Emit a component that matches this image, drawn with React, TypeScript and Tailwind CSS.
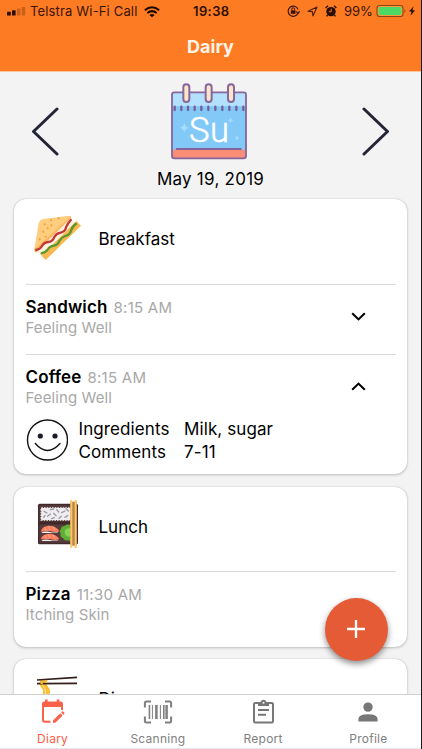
import React from "react";

function StatusBar() {
  return (
    <div className="flex h-[23px] items-center text-[13px] leading-none text-[#3a1404]">
      <svg className="ml-[6px] h-[9px] w-[20px]" viewBox="0 0 20 9">
        <rect x="1" y="4.8" width="3.8" height="3.7" rx="0.6" fill="#2b0f02" />
        <rect x="6" y="3.3" width="3.6" height="5.2" rx="0.6" fill="#2b0f02" />
        <rect x="11" y="1.5" width="3.4" height="7" rx="0.6" fill="#c9601b" />
        <rect x="15.8" y="0" width="3.4" height="8.5" rx="0.6" fill="#c9601b" />
      </svg>
      <span className="ml-[4px] w-[107px] whitespace-nowrap tracking-[0.16px]">Telstra Wi-Fi Call</span>
      <svg className="ml-[7px] h-[12px] w-[16px]" viewBox="0 0 16 12" fill="none" stroke="#1d0a02" strokeWidth="2">
        <path d="M0.8 4.3Q8 -1.8 15.2 4.3" />
        <path d="M3.3 7Q8 3.2 12.7 7" />
        <path d="M8 11.2L5.4 8.9Q8 7 10.6 8.9Z" fill="#1d0a02" stroke="none" />
      </svg>
      <span className="ml-[33px] w-[38px] whitespace-nowrap text-[13px] font-semibold tracking-[0.4px] text-[#2b0f02]">19:38</span>
      <svg className="-mt-px ml-[56px] h-[12px] w-[13px]" viewBox="0 0 13 12" fill="none" stroke="#32120a">
        <path d="M10.8 8.5A5.1 5.1 0 1 1 11 4.4M9.2 6.5L11 8.6L12.6 6.3" strokeWidth="1.1" />
        <rect x="3.9" y="5.4" width="4.6" height="3.4" fill="#32120a" stroke="none" />
        <path d="M4.8 5.5V4.2a1.4 1.4 0 0 1 2.8 0v1.3" />
      </svg>
      <svg className="-mt-px ml-[7px] h-[11px] w-[11px]" viewBox="0 0 11 11" fill="none" stroke="#4a1c08" strokeWidth="1.1" strokeLinejoin="round">
        <path d="M10 1L6 10L5.4 5.6L1 5.2Z" />
      </svg>
      <svg className="-mt-px ml-[7px] h-[12px] w-[12px]" viewBox="0 0 12 12" fill="#260d03">
        <circle cx="6" cy="6.6" r="4.7" />
        <path d="M0.6 3L3 0.8M11.4 3L9 0.8M2.6 10L1.6 11.4M9.4 10L10.4 11.4" stroke="#260d03" strokeWidth="1.3" />
        <path d="M6.2 3.8V6.8H3.8" fill="none" stroke="#fd7b23" />
      </svg>
      <span className="ml-[7px] w-[30px] whitespace-nowrap">99%</span>
      <svg className="-mt-[2px] ml-[2px] h-[14px] w-[40px]" viewBox="0 0 40 14">
        <rect x="1" y="1.5" width="26" height="11" rx="2.8" fill="#fd9a3d" stroke="#8c4514" strokeWidth="1.1" />
        <rect x="2.6" y="3" width="22.8" height="8" rx="1.4" fill="#4cd964" />
        <path d="M28.5 5q2 2 0 4z" fill="#8c4514" />
        <path d="M37.6 2.3L33 7.6h2.5l-1 4.2L39 6.3h-2.6z" fill="#260d03" />
      </svg>
    </div>
  );
}

function CalendarIcon() {
  return (
    <svg className="mr-[3px] h-[80px] w-[80px]" viewBox="58 28 240 240">
      <rect x="67" y="62" width="222" height="198" rx="7" fill="#82c9f7" />
      <path d="M67 104V69q0-7 7-7h208q7 0 7 7v35z" fill="#b3e0fd" />
      <path d="M67 234h222v20q0 6-6 6H73q-6 0-6-6z" fill="#f98d76" />
      <path d="M81 232H273" stroke="#84659b" strokeWidth="6" strokeLinecap="round" />
      <rect x="67" y="62" width="222" height="198" rx="7" fill="none" stroke="#87669d" strokeWidth="5.5" />
      <path d="M75 105v10M95 105v10M115 105v10M135 105v10M155 105v10M176 105v10M197 105v10M218 105v10M239 105v10M260 105v10M281 105v10" stroke="#765f97" strokeWidth="7" strokeLinecap="round" />
      {[110, 177, 244].map((x) => (
        <rect key={x} x={x - 9} y="38" width="18" height="53" rx="9" fill="#fce5c8" stroke="#87669d" strokeWidth="6" />
      ))}
      <path d="M104 153q2 13 15 15q-13 2-15 15q-2-13-15-15q13-2 15-15zM243 136q1 9 10 10q-9 1-10 10q-1-9-10-10q9-1 10-10z" fill="#a8dcfb" />
      <circle cx="262" cy="199" r="5" fill="#a8dcfb" />
      <text x="118" y="211" fontFamily="Roboto, sans-serif" fontSize="104" fontWeight="300" fill="#fff" stroke="#fff" strokeWidth="1.5" textLength="120" lengthAdjust="spacing">Su</text>
    </svg>
  );
}

function SandwichIcon() {
  return (
    <svg className="h-[65px] w-[65px]" viewBox="0 0 195 195">
      <path d="M28 135L41 58Q44 47 55 45L133 35Q138 35 138 39L137 60L50 143L30 142Z" fill="#ffcd7e" />
      <path d="M28 135L45 121L138 37V50L40 148L29 143Z" fill="#fbb763" />
      <path d="M34 145L138 42L157 64L56 158Z" fill="#fff3df" />
      <path d="M31 143Q45 142 51 131Q57 120 70 119Q84 117 88 104Q94 93 107 91Q121 87 123 75Q127 65 139 51" fill="none" stroke="#c03734" strokeWidth="7" transform="translate(0 -5)" />
      <path d="M49 155L154 51L168 65L62 168Z" fill="#fbb84f" />
      <path d="M47 154Q62 151 68 142Q73 132 87 130Q100 127 103 116Q109 105 121 101Q135 97 138 85Q142 72 155 63" fill="none" stroke="#59982e" strokeWidth="7" transform="translate(0 -5)" />
      <g fill="#ee9c3c">
        <circle cx="59" cy="61" r="3" /><circle cx="78" cy="49" r="3" /><circle cx="101" cy="43" r="3" />
        <circle cx="55" cy="83" r="3" /><circle cx="68" cy="73" r="3" /><circle cx="79" cy="64" r="3" />
        <circle cx="44" cy="106" r="3" /><circle cx="62" cy="98" r="2.5" />
      </g>
    </svg>
  );
}

function BentoIcon() {
  return (
    <svg className="h-[65px] w-[65px]" viewBox="0 0 195 195">
      <rect x="39" y="41" width="120" height="122" rx="5" fill="#40282b" />
      <rect x="43" y="46" width="112" height="112" fill="#573c3b" />
      <path d="M43 99H155" stroke="#40282b" strokeWidth="9" />
      <rect x="49" y="54" width="88" height="36" fill="#efedf0" stroke="#efedf0" strokeWidth="5" strokeDasharray="5 3" />
      <path d="M57 64l9 5M76 59l10-2M95 59l6 7M110 68l10-5M123 56l7 7M68 79l8-7M86 70l7 7M102 85l7-6M120 82l8-5M56 82l4-6M80 86l8-3" stroke="#9b9aa1" strokeWidth="4" strokeLinecap="round" />
      <g fill="#ff8060">
        <path d="M48 125Q49 110 70 107Q95 107 103 124Q98 128 75 123Q58 123 48 125Z" />
        <path d="M48 148Q49 134 70 131Q95 131 103 148Q90 153 75 147Q58 147 48 148Z" />
      </g>
      <path d="M59 112l4 8M70 109l5 11M84 110l5 11M59 136l4 8M70 133l5 11M84 134l5 11" stroke="#ffb095" strokeWidth="2.5" />
      <path d="M50 127q12-4 25-1q13 3 24 1l-2 2H52zM50 151q12-4 25-1q13 3 24 1l-2 2H52z" fill="#f4f1f2" />
      <path d="M137 105Q126 101 119 108Q108 108 108 117Q101 123 107 131Q104 141 114 144Q119 154 130 151L137 153Z" fill="#60ad36" />
      <path d="M137 115q-14-3-18 9q-1 14 12 16l6-1z" fill="#8bd052" />
      <path d="M136 35h19v132h-19z" fill="#b8864a" />
      <path d="M139 30V174M152 30V174" stroke="#ffc766" strokeWidth="6" />
    </svg>
  );
}

function NoodlesIcon() {
  return (
    <svg className="h-[65px] w-[65px]" viewBox="0 0 195 195">
      <path d="M50 54Q43 68 53 77Q62 86 52 108M58 54Q50 67 61 77Q70 86 61 108M65 54Q56 65 66 75Q77 85 67 108" fill="none" stroke="#fbbd2f" strokeWidth="6" />
      <path d="M54 62Q50 69 58 78" stroke="#ffe27a" strokeWidth="3" fill="none" />
      <path d="M36 54L156 46M36 65L156 64" stroke="#33201d" strokeWidth="5" />
      <path d="M50 57v9M62 55v8" stroke="#fbbd2f" strokeWidth="7" />
    </svg>
  );
}

function MealHeader({ icon, title, tall }: { icon: React.ReactNode; title: string; tall?: boolean }) {
  return (
    <div className={`flex items-start pl-[11px] ${tall ? "h-[85px]" : "h-[84px]"}`}>
      <div className={tall ? "mt-[5px]" : "mt-[3px]"}>{icon}</div>
      <div className="ml-[8.5px] mt-[28px] text-[17px] leading-[24px]">{title}</div>
    </div>
  );
}

function Entry({ name, time, mood, chevron, expanded }: { name: string; time: string; mood: string; chevron?: boolean; expanded?: boolean }) {
  return (
    <div className="ml-[11.5px] mr-[11px] flex justify-between border-t border-[#d9d9d9] pt-[11px]">
      <div>
        <div className="flex h-[22px] items-baseline gap-[6px] whitespace-nowrap leading-[22px]">
          <span className="text-[17px] font-semibold tracking-[0.15px]">{name}</span>
          <span className="text-[15px] tracking-[0.25px] text-[#a8a8a8]">{time}</span>
        </div>
        <div className="h-[20px] text-[15px] leading-[20px] tracking-[0.1px] text-[#a8a8a8]">{mood}</div>
      </div>
      {chevron && (
        <svg className="mr-[30px] mt-[16px] h-[9px] w-[15px]" viewBox="0 0 15 9" fill="none" stroke="#000" strokeWidth="2.1">
          <path d={expanded ? "M1.2 7.8L7.5 1.6L13.8 7.8" : "M1.2 1.2L7.5 7.4L13.8 1.2"} />
        </svg>
      )}
    </div>
  );
}

function Card({ className, children }: { className: string; children: React.ReactNode }) {
  return (
    <section className={`mx-[14px] w-[393px] shrink-0 rounded-[12px] bg-white shadow-[0_0_1px_rgba(0,0,0,0.3),0_1px_3px_rgba(0,0,0,0.2)] ${className}`}>
      {children}
    </section>
  );
}

function Tab({ label, active, children }: { label: string; active?: boolean; children: React.ReactNode }) {
  return (
    <div className={`flex flex-1 flex-col items-center text-[12px] tracking-[0.25px] ${active ? "text-[#fb6048]" : "text-[#808080]"}`}>
      <div className="flex h-[35px] items-center">{children}</div>
      <span className="mt-[1px] leading-[16px]">{label}</span>
    </div>
  );
}

export default function App() {
  return (
    <div className="relative flex h-[749px] w-[422px] flex-col overflow-hidden border-r border-[#1a1a1a] bg-[#f3f3f3] text-black [font-family:Inter,'Liberation_Sans',sans-serif]">
      <header className="h-[72px] shrink-0 border-b border-[#fbc69a] bg-[#fd7b23]">
        <StatusBar />
        <h1 className="mt-[11px] text-center text-[18px] font-bold leading-[26px] text-[#fff4e8]">Dairy</h1>
      </header>

      <main className="flex min-h-0 flex-1 flex-col overflow-hidden">
        <div className="flex h-[127px] shrink-0 justify-between pl-[31px] pr-[31px]">
          <svg className="mt-[34px] h-[51px] w-[28px]" viewBox="0 0 28 51" fill="none" stroke="#242437" strokeWidth="3" strokeLinecap="round" strokeLinejoin="round">
            <path d="M26 3L2.5 25.5L26 48" />
          </svg>
          <div className="flex flex-col items-center pt-[9px]">
            <CalendarIcon />
            <div className="mt-[6px] whitespace-nowrap text-[17px] leading-[24px] tracking-[0.25px]">May 19, 2019</div>
          </div>
          <svg className="mt-[34px] h-[51px] w-[28px]" viewBox="0 0 28 51" fill="none" stroke="#242437" strokeWidth="3" strokeLinecap="round" strokeLinejoin="round">
            <path d="M2 3L25.5 25.5L2 48" />
          </svg>
        </div>

        <Card className="h-[275px]">
          <MealHeader icon={<SandwichIcon />} title="Breakfast" tall />
          <div className="h-[70px]">
            <Entry name="Sandwich" time="8:15 AM" mood="Feeling Well" chevron />
          </div>
          <Entry name="Coffee" time="8:15 AM" mood="Feeling Well" chevron expanded />
          <div className="flex pl-[12px] pt-[10px]">
            <svg className="mt-[1px] h-[42px] w-[42px]" viewBox="0 0 42 42" fill="none" stroke="#111" strokeWidth="1.4">
              <circle cx="21.5" cy="21" r="20" />
              <circle cx="14.3" cy="17" r="2.6" fill="#1c1c28" stroke="none" />
              <circle cx="29" cy="17" r="2.6" fill="#1c1c28" stroke="none" />
              <path d="M9.3 24.5Q21.5 38.5 34 24.5" strokeLinecap="round" />
            </svg>
            <div className="ml-[10.5px] grid grid-cols-[105.5px_auto] text-[17px] leading-[23px] tracking-[0.1px]">
              <span>Ingredients</span>
              <span>Milk, sugar</span>
              <span>Comments</span>
              <span>7-11</span>
            </div>
          </div>
        </Card>

        <Card className="mt-[13px] h-[160px]">
          <MealHeader icon={<BentoIcon />} title="Lunch" />
          <Entry name="Pizza" time="11:30 AM" mood="Itching Skin" />
        </Card>

        <Card className="mt-[12px] h-[160px]">
          <MealHeader icon={<NoodlesIcon />} title="Dinner" />
        </Card>
      </main>

      <nav className="flex h-[55px] shrink-0 border-b border-t border-b-[#e8e8e8] border-t-[#cfcfcf] bg-white">
        <Tab label="Diary" active>
          <svg className="-mt-[3px] h-[24px] w-[24px]" viewBox="0 0 24 24" fill="none" stroke="#fb6048">
            <path d="M9.5 22.8H4Q2 22.8 2 20.8V5" strokeWidth="2" />
            <path d="M1 8V5Q1 2.4 3.5 2.4H4V0.5H6.6V2.4H15.8V0.5H18.4V2.4H19.5Q22 2.4 22 5V8Z" fill="#fb6048" stroke="none" />
            <path d="M21 7V11" strokeWidth="2" />
            <path d="M12 21.5L19.4 14.3L21.6 16.5L14.3 23.7H12ZM20.2 13.5L21 12.6Q21.7 12.1 22.3 12.7L23.2 13.6Q23.8 14.3 23.2 14.9L22.4 15.7Z" fill="#fb6048" stroke="none" />
          </svg>
        </Tab>
        <Tab label="Scanning">
          <svg className="-mt-[1px] h-[24px] w-[30px]" viewBox="0 0 30 24" fill="none" stroke="#808080">
            <path d="M1.9 7.5V3Q1.9 1.5 3.4 1.5H8M22 1.5H26.6Q28.1 1.5 28.1 3V7.5M28.1 16.5V21Q28.1 22.5 26.6 22.5H22M8 22.5H3.4Q1.9 22.5 1.9 21V16.5" strokeWidth="2" />
            <path d="M6.4 5V19M20.8 5V19" strokeWidth="1.6" />
            <path d="M9.4 5V19M17.4 5V19" strokeWidth="1" />
            <path d="M13.4 5V19M23.6 5V19" strokeWidth="2.5" />
          </svg>
        </Tab>
        <Tab label="Report">
          <svg className="-mt-[2px] h-[25px] w-[23px]" viewBox="0 0 23 25" fill="none" stroke="#777">
            <rect x="2" y="4" width="19" height="19.5" rx="1.2" strokeWidth="2" />
            <path d="M6 3H8.6Q9.3 0.7 11.5 0.7T14.4 3H17V7H6Z" fill="#777" stroke="none" />
            <circle cx="11.5" cy="3.7" r="1" fill="#fff" stroke="none" />
            <path d="M6 11H17M6 15.8H14" strokeWidth="2" />
          </svg>
        </Tab>
        <Tab label="Profile">
          <svg className="-mt-[1px] h-[20px] w-[20px]" viewBox="0 0 20 20" fill="#777">
            <circle cx="10" cy="5.1" r="4.7" />
            <path d="M0.4 19.5V17Q0.4 12.2 10 12.2T19.6 17V19.5Z" />
          </svg>
        </Tab>
      </nav>

      <button className="absolute left-[324.5px] top-[597.5px] flex h-[63px] w-[63px] items-center justify-center rounded-full bg-[#e55b35] shadow-[0_3px_6px_rgba(0,0,0,0.45)]" aria-label="Add">
        <svg className="h-[18px] w-[18px]" viewBox="0 0 18 18" stroke="#fff" strokeWidth="2.3">
          <path d="M9 0V18M0 9H18" />
        </svg>
      </button>
    </div>
  );
}
